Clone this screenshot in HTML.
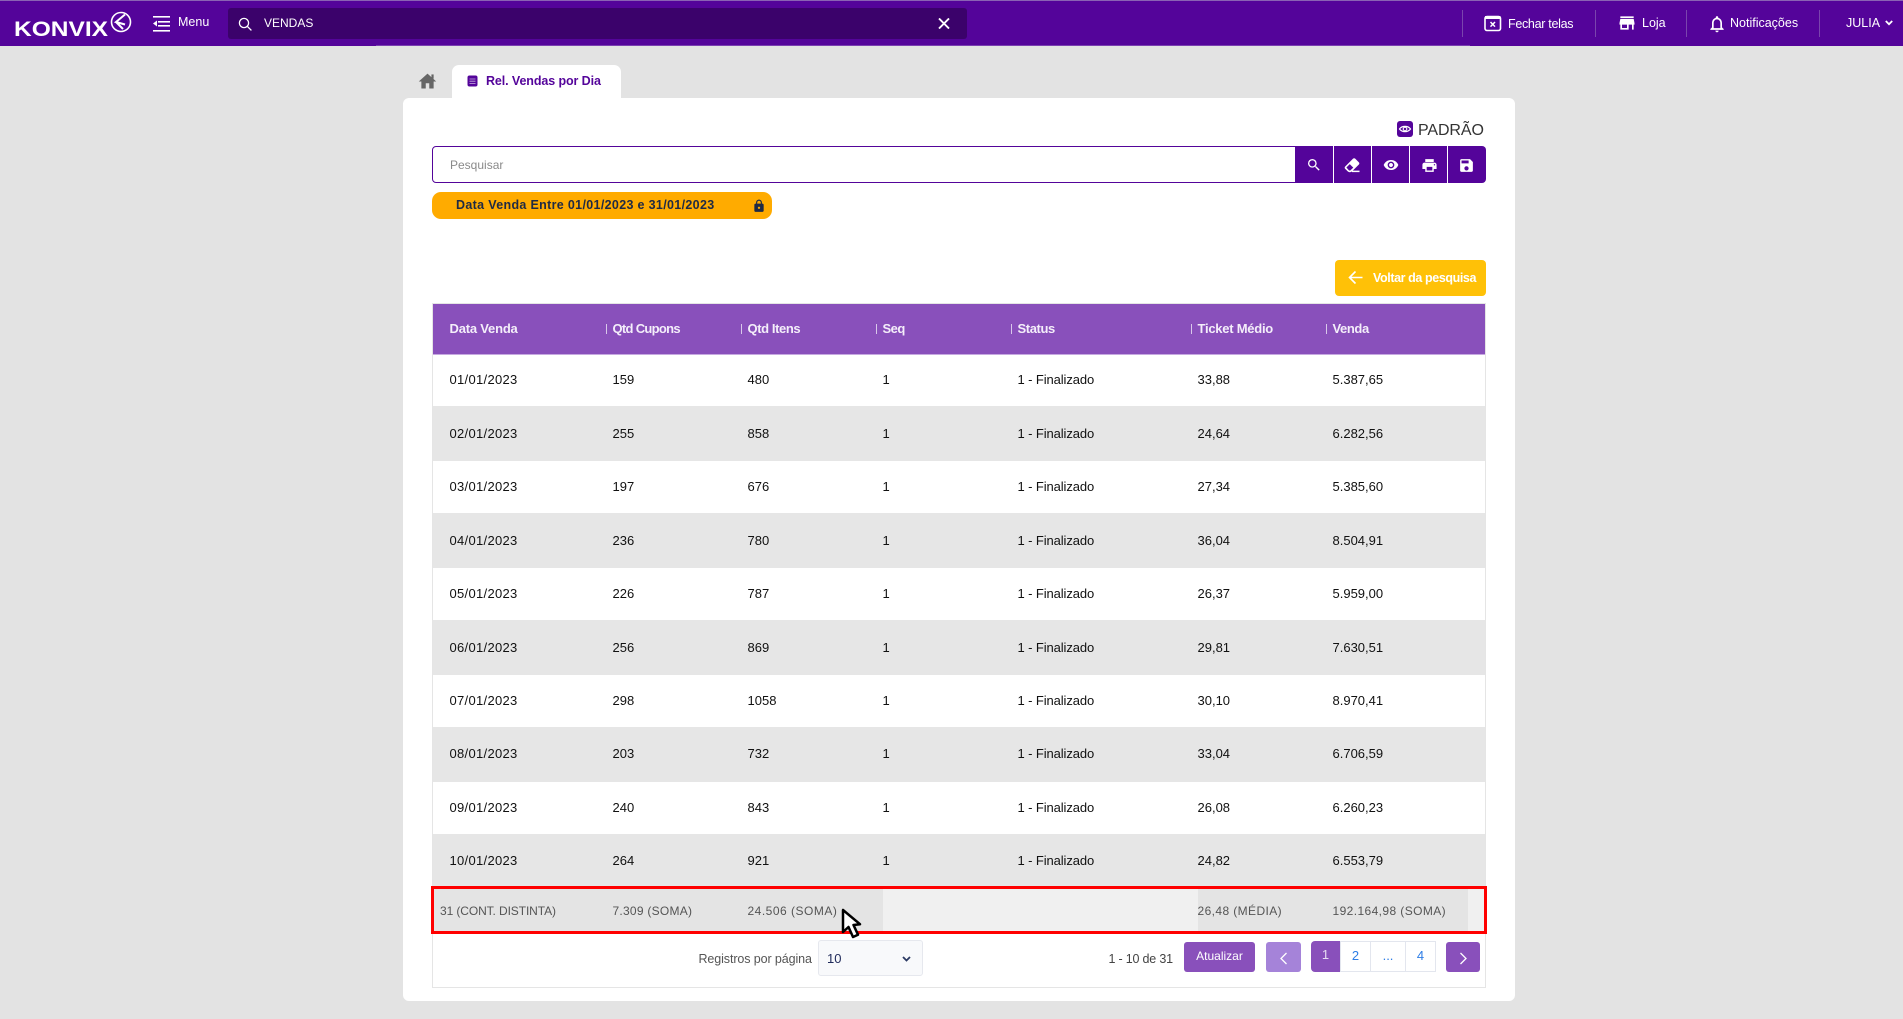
<!DOCTYPE html>
<html lang="pt"><head><meta charset="utf-8"><title>Rel. Vendas por Dia</title>
<style>
*{box-sizing:border-box}
html,body{margin:0;padding:0}
body{width:1903px;height:1019px;overflow:hidden;position:relative;background:#e3e3e3;font-family:"Liberation Sans",sans-serif;font-size:13px;color:#111}
.a{position:absolute;white-space:nowrap}
svg{position:absolute;display:block}
.t{position:absolute;white-space:nowrap;line-height:20px;height:20px}
.nav{color:#fff;font-size:12.5px}
.sep{position:absolute;top:10px;height:27px;width:1px;background:#7a45ad}
.row{position:absolute;left:433px;width:1052px}
.c{position:absolute;white-space:nowrap;font-size:13px;line-height:20px;height:20px;color:#111}
.d{letter-spacing:.3px}
.st{letter-spacing:-.1px}
.h{position:absolute;top:319px;font-size:13px;font-weight:bold;color:#f4eefa;line-height:20px;white-space:nowrap}
.hs{position:absolute;top:324px;width:1px;height:10px;background:#d9c8ea}
.s{position:absolute;top:901px;font-size:12px;letter-spacing:.4px;color:#555;line-height:20px;white-space:nowrap}
.pg{position:absolute;top:941px;height:31px;background:#fff;border:1px solid #e3e6ee;color:#2d7de6;font-size:13px;text-align:center;line-height:28px}
</style></head><body>

<div class="a" style="left:0;top:0;width:1903px;height:46px;background:#54049a"></div>
<div class="a" style="left:0;top:0;width:1903px;height:1px;background:#8a63b4"></div>
<div class="a" style="left:376px;top:45px;width:1094px;height:1px;background:#7a3fb0"></div>

<svg style="left:0;top:0" width="140" height="46">
<text x="14" y="36" font-family="Liberation Sans" font-weight="bold" font-size="21" fill="#fff" textLength="94" lengthAdjust="spacingAndGlyphs">KONVIX</text>
<circle cx="121" cy="22" r="9.5" fill="none" stroke="#fff" stroke-width="1.6"/>
<path d="M125 14.5L116 22l9 2.5M116 22l7 7" fill="none" stroke="#fff" stroke-width="2"/>
</svg>
<svg style="left:153px;top:15px" width="18" height="18" fill="#fff"><rect x="0" y="1" width="17" height="1.6"/><rect x="5" y="6" width="12" height="1.6"/><rect x="5" y="10" width="12" height="1.6"/><rect x="0" y="15" width="17" height="1.6"/><path d="M4 5.500v6L0 8.500z"/></svg>
<div class="t nav" style="left:178px;top:12px;font-size:12.5px">Menu</div>

<div class="a" style="left:228px;top:8px;width:739px;height:31px;background:#3b026b;border-radius:3px"></div>
<svg style="left:238px;top:17px" width="14" height="14" fill="none" stroke="#fff" stroke-width="1.3"><circle cx="6" cy="6" r="4.6"/><path d="M9.400 9.400L13.400 13.400"/></svg>
<div class="t nav" style="left:264px;top:13px;font-size:12px">VENDAS</div>
<svg style="left:938px;top:18px" width="12" height="11" stroke="#fff" stroke-width="1.9"><path d="M1 .5L11 10.500M11 .5L1 10.500"/></svg>

<div class="sep" style="left:1462px"></div><div class="sep" style="left:1595px"></div><div class="sep" style="left:1686px"></div><div class="sep" style="left:1819px"></div>
<svg style="left:1484px;top:15px" width="18" height="17"><rect x="1" y="1.500" width="15.500" height="14" rx="2" fill="none" stroke="#fff" stroke-width="1.6"/><rect x="1" y="1" width="15.500" height="3" fill="#fff"/><path d="M6.500 7l4.500 4.600M11 7l-4.500 4.600" stroke="#fff" stroke-width="1.5"/></svg>
<div class="t nav" style="left:1508px;top:14px;letter-spacing:-.3px">Fechar telas</div>
<svg style="left:1617px;top:13px" width="20" height="20" viewBox="0 0 24 24" fill="#fff"><path d="M20 4H4v2h16V4zm1 10v-2l-1-5H4l-1 5v2h1v6h10v-6h4v6h2v-6h1zm-9 4H6v-4h6v4z"/></svg>
<div class="t nav" style="left:1642px;top:13px">Loja</div>
<svg style="left:1707px;top:14px" width="20" height="20" viewBox="0 0 24 24" fill="#fff"><path d="M12 22c1.100 0 2-.900 2-2h-4c0 1.100.900 2 2 2zm6-6v-5c0-3.070-1.630-5.640-4.500-6.320V4c0-.830-.670-1.500-1.500-1.500s-1.500.670-1.500 1.500v.680C7.640 5.360 6 7.920 6 11v5l-2 2v1h16v-1l-2-2zm-2 1H8v-6c0-2.480 1.510-4.500 4-4.500s4 2.020 4 4.500v6z"/></svg>
<div class="t nav" style="left:1730px;top:13px">Notificações</div>
<div class="t nav" style="left:1846px;top:13px">JULIA</div>
<svg style="left:1885px;top:20px" width="8" height="6" fill="none" stroke="#fff" stroke-width="1.8"><path d="M.8 1l3.200 3.200L7.200 1"/></svg>

<svg style="left:417px;top:72px" width="21" height="18" viewBox="0 2 24 19" fill="#666"><path d="M10 20v-6h4v6h5v-8h3L12 3 2 12h3v8z"/><rect x="16.500" y="4" width="2.500" height="5"/></svg>
<div class="a" style="left:452px;top:65px;width:169px;height:40px;background:#fff;border-radius:7px 7px 0 0"></div>
<svg style="left:467px;top:75px" width="11" height="12"><rect x=".5" y=".5" width="10" height="11" rx="2" fill="#54049a"/><path d="M2.500 4h6M2.500 6.200h6M2.500 8.400h6" stroke="#c9b3e0" stroke-width=".8"/></svg>
<div class="t" style="left:486px;top:71px;font-size:12.5px;font-weight:bold;color:#54049a;letter-spacing:-.1px">Rel. Vendas por Dia</div>

<div class="a" style="left:403px;top:98px;width:1112px;height:903px;background:#fff;border-radius:6px"></div>

<svg style="left:1397px;top:121px" width="16" height="16"><rect width="16" height="16" rx="3" fill="#54049a"/><path d="M2.500 8C5 4.500 11 4.500 13.500 8 11 11.500 5 11.500 2.500 8z" fill="none" stroke="#fff" stroke-width="1.200"/><circle cx="8" cy="8" r="1.800" fill="none" stroke="#fff" stroke-width="1.100"/></svg>
<div class="t" style="left:1418px;top:121px;font-size:16px;color:#333;letter-spacing:-.1px">PADRÃO</div>

<div class="a" style="left:432px;top:146px;width:870px;height:37px;border:1.500px solid #54049a;border-radius:4px"></div>
<div class="t" style="left:450px;top:155px;font-size:12px;color:#8a8a8a">Pesquisar</div>
<div class="a" style="left:1295px;top:145.500px;width:191px;height:37.500px;background:#54049a;border-radius:0 4px 4px 0"></div>
<div class="a" style="left:1333px;top:146px;width:1px;height:37px;background:#fff"></div>
<div class="a" style="left:1371px;top:146px;width:1px;height:37px;background:#fff"></div>
<div class="a" style="left:1409px;top:146px;width:1px;height:37px;background:#fff"></div>
<div class="a" style="left:1447px;top:146px;width:1px;height:37px;background:#fff"></div>
<svg style="left:1306px;top:157px" width="16" height="16" viewBox="0 0 24 24" fill="#fff"><path d="M9.500 3A6.500 6.500 0 0 1 16 9.500c0 1.610-.590 3.090-1.560 4.230l.270.270h.790l5 5-1.500 1.500-5-5v-.790l-.270-.270A6.516 6.516 0 0 1 9.500 16 6.500 6.500 0 0 1 3 9.500 6.500 6.500 0 0 1 9.500 3m0 2C7 5 5 7 5 9.500S7 14 9.500 14 14 12 14 9.500 12 5 9.500 5z"/></svg>
<svg style="left:1343px;top:156px" width="18" height="18" viewBox="0 0 24 24" fill="#fff"><path d="M16.240 3.560l4.950 4.940c.780.790.780 2.050 0 2.840L12 20.530a4.008 4.008 0 0 1-5.660 0L2.810 17c-.780-.790-.780-2.050 0-2.840l10.600-10.600c.790-.780 2.050-.780 2.830 0z"/><rect x="12" y="19.500" width="10" height="2"/><path d="M4.500 15.300L9 10.800l4.700 4.700-3.700 3.500c-.6.500-1.600.500-2.200 0z" fill="#54049a"/></svg>
<svg style="left:1383px;top:157px" width="16" height="16" viewBox="0 0 24 24" fill="#fff"><path d="M12 4.500C7 4.500 2.730 7.610 1 12c1.730 4.390 6 7.500 11 7.500s9.270-3.110 11-7.500c-1.730-4.390-6-7.500-11-7.500zM12 17c-2.760 0-5-2.240-5-5s2.240-5 5-5 5 2.240 5 5-2.240 5-5 5zm0-8c-1.660 0-3 1.340-3 3s1.340 3 3 3 3-1.340 3-3-1.340-3-3-3z"/></svg>
<svg style="left:1420.500px;top:156.500px" width="17" height="17" viewBox="0 0 24 24" fill="#fff"><path d="M19 8H5c-1.660 0-3 1.340-3 3v6h4v4h12v-4h4v-6c0-1.660-1.340-3-3-3zm-3 11H8v-5h8v5zm3-7c-.550 0-1-.450-1-1s.450-1 1-1 1 .450 1 1-.450 1-1 1zm-1-9H6v4h12V3z"/></svg>
<svg style="left:1458px;top:156.500px" width="17" height="17" viewBox="0 0 24 24" fill="#fff"><path d="M17 3H5c-1.110 0-2 .900-2 2v14c0 1.100.890 2 2 2h14c1.100 0 2-.900 2-2V7l-4-4zm-5 16c-1.660 0-3-1.340-3-3s1.340-3 3-3 3 1.340 3 3-1.340 3-3 3zm3-10H5V5h10v4z"/></svg>

<div class="a" style="left:432px;top:192px;width:340px;height:27px;background:#ffab00;border-radius:9px"></div>
<div class="t" style="left:456px;top:195px;font-size:12.5px;font-weight:bold;color:#1f2a44;letter-spacing:.33px">Data Venda Entre 01/01/2023 e 31/01/2023</div>
<svg style="left:752px;top:199px" width="14" height="14" viewBox="0 0 24 24" fill="#1f2a44"><path d="M18 8h-1V6c0-2.760-2.240-5-5-5S7 3.240 7 6v2H6c-1.100 0-2 .900-2 2v10c0 1.100.900 2 2 2h12c1.100 0 2-.900 2-2V10c0-1.100-.900-2-2-2zm-6 9c-1.100 0-2-.900-2-2s.900-2 2-2 2 .900 2 2-.900 2-2 2zm3.100-9H8.900V6c0-1.710 1.390-3.100 3.100-3.100 1.710 0 3.100 1.390 3.100 3.100v2z"/></svg>

<div class="a" style="left:1335px;top:260px;width:151px;height:36px;background:#ffc107;border-radius:4px"></div>
<svg style="left:1348px;top:270px" width="15" height="15" fill="none" stroke="#fff" stroke-width="1.600"><path d="M14.500 7.500H1.500M7.500 1.500l-6 6 6 6"/></svg>
<div class="t" style="left:1373px;top:268px;font-size:12.5px;font-weight:bold;color:#fff;letter-spacing:-.4px">Voltar da pesquisa</div>

<div class="a" style="left:432px;top:303px;width:1054px;height:685px;border:1.500px solid #e5e5e5;background:#fff"></div>
<div class="a" style="left:433px;top:304px;width:1052px;height:51px;background:#8950bb;border-bottom:1px solid #c6a9e0"></div>
<div class="h" style="left:449.500px;letter-spacing:-.2px">Data Venda</div>
<div class="hs" style="left:606px"></div><div class="h" style="left:612.500px;letter-spacing:-.7px">Qtd Cupons</div>
<div class="hs" style="left:741px"></div><div class="h" style="left:747.500px;letter-spacing:-.4px">Qtd Itens</div>
<div class="hs" style="left:875.500px"></div><div class="h" style="left:882.500px;letter-spacing:-.5px">Seq</div>
<div class="hs" style="left:1011px"></div><div class="h" style="left:1017.500px;letter-spacing:-.4px">Status</div>
<div class="hs" style="left:1191px"></div><div class="h" style="left:1197.500px;letter-spacing:-.25px">Ticket Médio</div>
<div class="hs" style="left:1326px"></div><div class="h" style="left:1332.500px;letter-spacing:-.4px">Venda</div>

<div class="row" style="top:406px;height:55px;background:#e6e6e6"></div>
<div class="row" style="top:513px;height:55px;background:#e6e6e6"></div>
<div class="row" style="top:620px;height:55px;background:#e6e6e6"></div>
<div class="row" style="top:727px;height:55px;background:#e6e6e6"></div>
<div class="row" style="top:834px;height:55px;background:#e6e6e6"></div>

<div class="c d" style="left:449.500px;top:370px">01/01/2023</div><div class="c" style="left:612.500px;top:370px">159</div><div class="c" style="left:747.500px;top:370px">480</div><div class="c" style="left:882.500px;top:370px">1</div><div class="c st" style="left:1017.500px;top:370px">1 - Finalizado</div><div class="c" style="left:1197.500px;top:370px">33,88</div><div class="c" style="left:1332.500px;top:370px">5.387,65</div>
<div class="c d" style="left:449.500px;top:424px">02/01/2023</div><div class="c" style="left:612.500px;top:424px">255</div><div class="c" style="left:747.500px;top:424px">858</div><div class="c" style="left:882.500px;top:424px">1</div><div class="c st" style="left:1017.500px;top:424px">1 - Finalizado</div><div class="c" style="left:1197.500px;top:424px">24,64</div><div class="c" style="left:1332.500px;top:424px">6.282,56</div>
<div class="c d" style="left:449.500px;top:477px">03/01/2023</div><div class="c" style="left:612.500px;top:477px">197</div><div class="c" style="left:747.500px;top:477px">676</div><div class="c" style="left:882.500px;top:477px">1</div><div class="c st" style="left:1017.500px;top:477px">1 - Finalizado</div><div class="c" style="left:1197.500px;top:477px">27,34</div><div class="c" style="left:1332.500px;top:477px">5.385,60</div>
<div class="c d" style="left:449.500px;top:531px">04/01/2023</div><div class="c" style="left:612.500px;top:531px">236</div><div class="c" style="left:747.500px;top:531px">780</div><div class="c" style="left:882.500px;top:531px">1</div><div class="c st" style="left:1017.500px;top:531px">1 - Finalizado</div><div class="c" style="left:1197.500px;top:531px">36,04</div><div class="c" style="left:1332.500px;top:531px">8.504,91</div>
<div class="c d" style="left:449.500px;top:584px">05/01/2023</div><div class="c" style="left:612.500px;top:584px">226</div><div class="c" style="left:747.500px;top:584px">787</div><div class="c" style="left:882.500px;top:584px">1</div><div class="c st" style="left:1017.500px;top:584px">1 - Finalizado</div><div class="c" style="left:1197.500px;top:584px">26,37</div><div class="c" style="left:1332.500px;top:584px">5.959,00</div>
<div class="c d" style="left:449.500px;top:638px">06/01/2023</div><div class="c" style="left:612.500px;top:638px">256</div><div class="c" style="left:747.500px;top:638px">869</div><div class="c" style="left:882.500px;top:638px">1</div><div class="c st" style="left:1017.500px;top:638px">1 - Finalizado</div><div class="c" style="left:1197.500px;top:638px">29,81</div><div class="c" style="left:1332.500px;top:638px">7.630,51</div>
<div class="c d" style="left:449.500px;top:691px">07/01/2023</div><div class="c" style="left:612.500px;top:691px">298</div><div class="c" style="left:747.500px;top:691px">1058</div><div class="c" style="left:882.500px;top:691px">1</div><div class="c st" style="left:1017.500px;top:691px">1 - Finalizado</div><div class="c" style="left:1197.500px;top:691px">30,10</div><div class="c" style="left:1332.500px;top:691px">8.970,41</div>
<div class="c d" style="left:449.500px;top:744px">08/01/2023</div><div class="c" style="left:612.500px;top:744px">203</div><div class="c" style="left:747.500px;top:744px">732</div><div class="c" style="left:882.500px;top:744px">1</div><div class="c st" style="left:1017.500px;top:744px">1 - Finalizado</div><div class="c" style="left:1197.500px;top:744px">33,04</div><div class="c" style="left:1332.500px;top:744px">6.706,59</div>
<div class="c d" style="left:449.500px;top:798px">09/01/2023</div><div class="c" style="left:612.500px;top:798px">240</div><div class="c" style="left:747.500px;top:798px">843</div><div class="c" style="left:882.500px;top:798px">1</div><div class="c st" style="left:1017.500px;top:798px">1 - Finalizado</div><div class="c" style="left:1197.500px;top:798px">26,08</div><div class="c" style="left:1332.500px;top:798px">6.260,23</div>
<div class="c d" style="left:449.500px;top:851px">10/01/2023</div><div class="c" style="left:612.500px;top:851px">264</div><div class="c" style="left:747.500px;top:851px">921</div><div class="c" style="left:882.500px;top:851px">1</div><div class="c st" style="left:1017.500px;top:851px">1 - Finalizado</div><div class="c" style="left:1197.500px;top:851px">24,82</div><div class="c" style="left:1332.500px;top:851px">6.553,79</div>

<div class="a" style="left:433px;top:889px;width:1052px;height:42px;background:#f0f0f0"></div>
<div class="a" style="left:433px;top:889px;width:450px;height:42px;background:#e4e4e4"></div>
<div class="a" style="left:1198px;top:889px;width:270px;height:42px;background:#e4e4e4"></div>
<div class="s" style="left:440px;letter-spacing:-.1px">31 (CONT. DISTINTA)</div>
<div class="s" style="left:612.500px;letter-spacing:.25px">7.309 (SOMA)</div>
<div class="s" style="left:747.500px;letter-spacing:.5px">24.506 (SOMA)</div>
<div class="s" style="left:1197.500px">26,48 (MÉDIA)</div>
<div class="s" style="left:1332.500px">192.164,98 (SOMA)</div>
<div class="a" style="left:431px;top:886px;width:1056px;height:48px;border:3px solid #f00"></div>

<div class="t" style="left:698.500px;top:949px;font-size:12.5px;color:#555;letter-spacing:-.1px">Registros por página</div>
<div class="a" style="left:818px;top:940px;width:105px;height:36px;background:#f8f9fb;border:1px solid #e6e8ee;border-radius:3px"></div>
<div class="t" style="left:827px;top:949px;font-size:13px;color:#1f2a5a">10</div>
<svg style="left:902px;top:956px" width="9" height="6" fill="none" stroke="#2b3a63" stroke-width="1.800"><path d="M1 1l3.500 3.500L8 1"/></svg>
<div class="t" style="left:1108.500px;top:949px;font-size:12.5px;color:#444;letter-spacing:-.2px">1 - 10 de 31</div>
<div class="a" style="left:1184px;top:942px;width:71px;height:30px;background:#8950bb;border-radius:3px;color:#fff;font-size:12px;text-align:center;line-height:28px">Atualizar</div>
<div class="a" style="left:1266px;top:942px;width:35px;height:30px;background:#a583d9;border-radius:3px"></div>
<svg style="left:1280px;top:952px" width="8" height="13" fill="none" stroke="#fff" stroke-width="1.300"><path d="M6.500 1L1 6.500l5.500 5.500"/></svg>
<div class="pg" style="left:1340px;width:31px">2</div>
<div class="pg" style="left:1370px;width:36px">...</div>
<div class="pg" style="left:1405px;width:31px">4</div>
<div class="a" style="left:1311px;top:941px;width:29px;height:31px;background:#8950bb;border-radius:4px 0 0 4px;color:#e8dcf3;font-size:13px;text-align:center;line-height:28px">1</div>
<div class="a" style="left:1446px;top:942px;width:34px;height:30px;background:#8950bb;border-radius:3px"></div>
<svg style="left:1459px;top:952px" width="8" height="13" fill="none" stroke="#fff" stroke-width="1.300"><path d="M1.500 1L7 6.500 1.500 12"/></svg>

<svg style="left:838px;top:905px" width="28" height="38"><path d="M5 5V27l5.500-5 4.500 10 5-2.300-4.500-9.700 6.500-.8z" fill="#fff" stroke="#000" stroke-width="2.500" stroke-linejoin="round"/></svg>
</body></html>
